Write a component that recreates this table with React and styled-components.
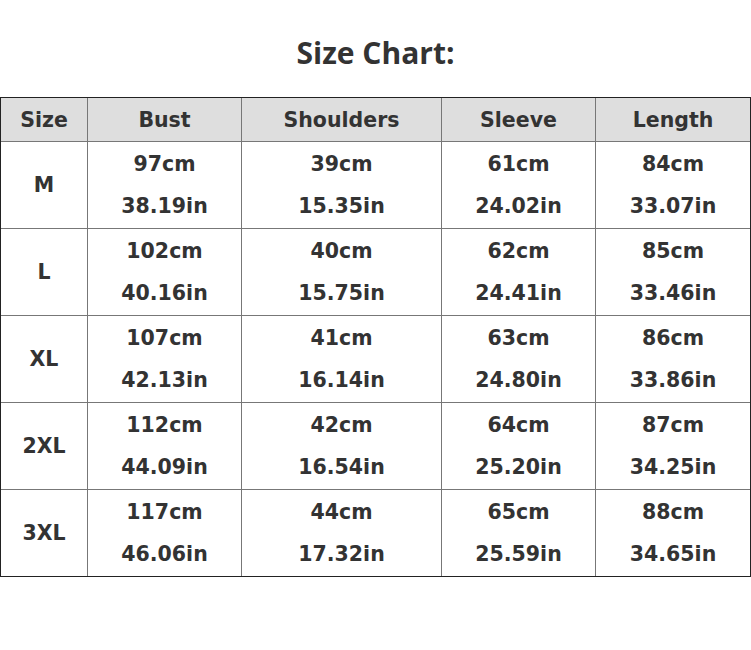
import React from "react";
import styled, { createGlobalStyle } from "styled-components";

const Global = createGlobalStyle`
  body {
    margin: 0;
    background: #fff;
  }
`;

const rows = [
  ["M", "97cm", "38.19in", "39cm", "15.35in", "61cm", "24.02in", "84cm", "33.07in"],
  ["L", "102cm", "40.16in", "40cm", "15.75in", "62cm", "24.41in", "85cm", "33.46in"],
  ["XL", "107cm", "42.13in", "41cm", "16.14in", "63cm", "24.80in", "86cm", "33.86in"],
  ["2XL", "112cm", "44.09in", "42cm", "16.54in", "64cm", "25.20in", "87cm", "34.25in"],
  ["3XL", "117cm", "46.06in", "44cm", "17.32in", "65cm", "25.59in", "88cm", "34.65in"],
];

const widths = [87, 154, 200, 154, 155];
const heads = ["Size", "Bust", "Shoulders", "Sleeve", "Length"];

export default function App() {
  return (
    <Page>
      <Global />
      <Title>Size Chart:</Title>
      <Table>
        <colgroup>
          {widths.map((w, i) => (
            <col key={i} style={{ width: w }} />
          ))}
        </colgroup>
        <thead>
          <tr>
            {heads.map((h) => (
              <Head key={h}>{h}</Head>
            ))}
          </tr>
        </thead>
        <tbody>
          {rows.map((r) => (
            <tr key={r[0]}>
              <Cell>{r[0]}</Cell>
              {[1, 3, 5, 7].map((i) => (
                <Cell key={i}>
                  <Line>{r[i]}</Line>
                  <Line>{r[i + 1]}</Line>
                </Cell>
              ))}
            </tr>
          ))}
        </tbody>
      </Table>
    </Page>
  );
}

const Page = styled.div`
  width: 751px;
  height: 650px;
  padding-top: 31px;
  box-sizing: border-box;
`;

const Title = styled.h1`
  margin: 0 0 22px;
  height: 44px;
  line-height: 44px;
  text-align: center;
  font-family: "Open Sans", "Noto Sans", sans-serif;
  font-weight: 700;
  font-size: 30px;
  color: #333;
`;

const Table = styled.table`
  width: 750px;
  border-collapse: collapse;
  table-layout: fixed;
  outline: 1px solid #222;
  outline-offset: -1px;
  font-family: "DejaVu Sans", Verdana, sans-serif;
  font-weight: 700;
  font-size: 20.5px;
  color: #333;
`;

const Head = styled.th`
  height: 43px;
  padding: 0;
  background: #dedede;
  border: 1px solid #777;
  text-align: center;
  vertical-align: middle;
  font-weight: 700;
`;

const Cell = styled.td`
  height: 86px;
  padding: 0;
  border: 1px solid #777;
  text-align: center;
  vertical-align: middle;
`;

const Line = styled.div`
  height: 42px;
  line-height: 42px;
`;
